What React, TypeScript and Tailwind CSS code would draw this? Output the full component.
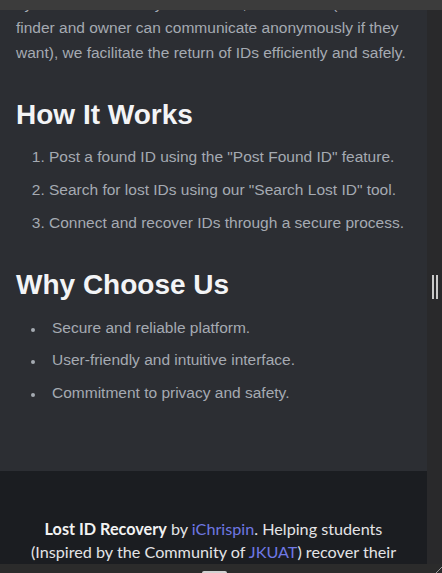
export default function App() {
  const steps = [
    'Post a found ID using the "Post Found ID" feature.',
    'Search for lost IDs using our "Search Lost ID" tool.',
    'Connect and recover IDs through a secure process.',
  ]
  const reasons = [
    'Secure and reliable platform.',
    'User-friendly and intuitive interface.',
    'Commitment to privacy and safety.',
  ]

  return (
    <div className="flex h-[573px] w-[442px] flex-col overflow-hidden bg-[#2b2b2b]">
      {/* top chrome */}
      <div className="h-[10px] shrink-0 bg-[#3c3c3c]" />

      <div className="flex min-h-0 flex-1">
        {/* page */}
        <div className="w-[427px] shrink-0 overflow-hidden bg-[#2c2e33] font-['Liberation_Sans',Arial,sans-serif]">
          <div className="px-4">
            <p className="-mt-[18.4px] text-[15.5px] leading-[24.8px] text-[#a5aab2]">
              by the secure chat system where, if a reunion (where the
              <br />
              finder and owner can communicate anonymously if they
              <br />
              want), we facilitate the return of IDs efficiently and safely.
            </p>

            <h2 className="mt-[31.5px] text-[28px] font-bold leading-[33.6px] text-[#f3f4f6]">How It Works</h2>
            <ol className="mt-[14px] flex list-decimal flex-col gap-[8px] pl-[33px] text-[15.5px] leading-[24.8px] text-[#a5aab2]">
              {steps.map(s => (
                <li key={s}>{s}</li>
              ))}
            </ol>

            <h2 className="mt-[32.5px] text-[28px] font-bold leading-[33.6px] text-[#f3f4f6]">Why Choose Us</h2>
            <ul className="mt-[14px] flex flex-col gap-[8px] text-[15.5px] leading-[24.8px] text-[#a5aab2]">
              {reasons.map(r => (
                <li key={r} className="flex items-start">
                  <span className="ml-[15px] mr-[17px] mt-[12px] h-[4px] w-[4px] shrink-0 rounded-full bg-[#a5aab2]" />
                  <span>{r}</span>
                </li>
              ))}
            </ul>
          </div>

          <footer className="mt-[65px] bg-[#1b1d21] px-6 pb-8 pt-[46px] text-center font-['Lato','Open_Sans',sans-serif] text-[16.2px] leading-[23px] text-[#e4e4e6]">
            <p>
              <span className="font-bold text-[#f2f2f2]">Lost ID Recovery</span> by{' '}
              <a href="#" className="text-[#6f78e3]">iChrispin</a>. Helping students
              <br />
              (Inspired by the Community of <a href="#" className="text-[#6f78e3]">JKUAT</a>) recover their
              <br />
              lost IDs quickly and securely.
            </p>
          </footer>
        </div>

        {/* side gutter with resize handle */}
        <div className="flex flex-1 items-center justify-center bg-[#29292b]">
          <div className="flex h-[24px] gap-[2px]">
            <span className="w-[2px] bg-[#c9c9c9]" />
            <span className="w-[2px] bg-[#c9c9c9]" />
          </div>
        </div>
      </div>

      {/* bottom chrome */}
      <div className="relative flex h-[9px] shrink-0 items-end bg-[#2b2b2b]">
        <span className="ml-[202px] h-[2px] w-[25px] rounded-t-sm bg-[#d2d2d2]" />
        <svg className="absolute bottom-0 right-0" width="7" height="7" viewBox="0 0 7 7">
          <path d="M7 1 L1 7" stroke="#9a9a9a" strokeWidth="1" />
        </svg>
      </div>
    </div>
  )
}
